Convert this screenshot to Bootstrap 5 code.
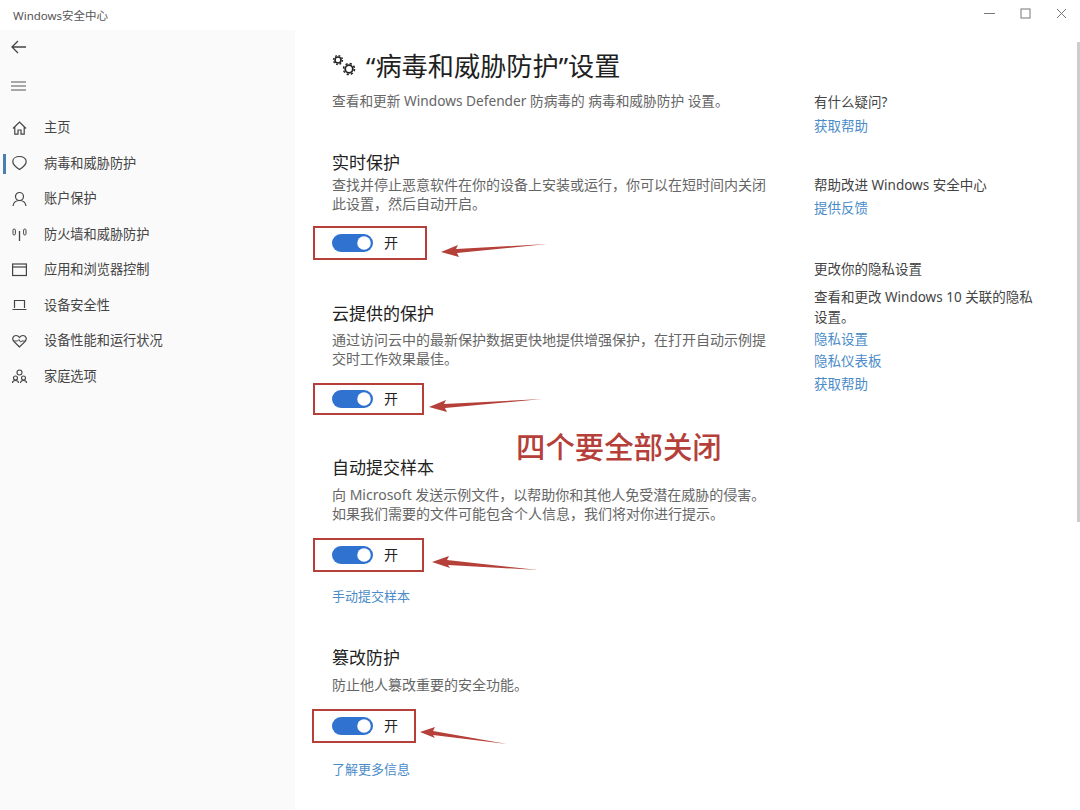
<!DOCTYPE html>
<html lang="zh-CN">
<head>
    <meta charset="UTF-8">
    <meta name="viewport" content="width=device-width, initial-scale=1">
    <title>Windows安全中心</title>
    <link href="https://cdn.jsdelivr.net/npm/bootstrap@5.3.0/dist/css/bootstrap.min.css" rel="stylesheet">
    <style>
        html, body { height: 100%; }
        body { font-family: "Noto Sans", "Noto Sans CJK SC", sans-serif; font-size: 14px; color: #333; background: #fff; overflow: hidden; }
        .app-shell { width: 1080px; height: 810px; position: relative; }
        .title-bar { height: 30px; }
        .app-name { font-size: 11.5px; color: #555; padding-left: 13px; padding-top: 8px; line-height: 16px; }
        .win-btns { gap: 25px; padding-right: 13px; padding-top: 7px; }
        .body-row { height: 780px; }
        .side-panel { width: 295px; background: #fafafa; }
        .side-top { height: 80px; padding-left: 11px; padding-top: 10px; }
        .side-top svg { display: block; }
        .side-top .menu-lines { margin-top: 27px; }
        .side-item { height: 35.5px; padding-left: 12px; gap: 17px; color: #444; font-size: 13.2px; line-height: 1; position: relative; }
        .side-item svg { flex: none; width: 15px; height: 16px; }
        .side-item.is-on::before { content: ""; position: absolute; left: 3px; top: 8px; width: 3px; height: 20px; background: #4a7fb0; }
        .center-col { width: 519px; padding-left: 37px; padding-top: 18px; }
        .page-title { font-size: 26.2px; line-height: 36px; color: #1f1f1f; margin: 0; font-weight: 400; }
        .page-title svg { margin-right: 9px; }
        .page-sub { margin-top: 7px; line-height: 20px; color: #666; font-size: 13.7px; }
        .block-head { font-size: 17px; line-height: 24px; color: #222; font-weight: 400; margin: 0; }
        .block-text { margin-top: 5px; line-height: 19px; font-size: 14px; color: #666; }
        .block-text.is-tight { margin-top: 0; }
        .toggle-row { position: relative; height: 34px; margin-top: 13px; }
        .toggle-box { display: inline-flex; align-items: center; height: 100%; margin-left: -19px; padding-left: 17px; border: 2px solid #b5403a; }
        .toggle-box .form-check { margin: 0; min-height: 0; padding-left: 0; display: flex; }
        .toggle-box .form-check-input { width: 41px; height: 18px; margin: 0; background-color: #2f72cf; border: 0; float: none; }
        .toggle-label { margin-left: 11px; color: #222; font-size: 14px; line-height: 1; }
        .red-arrow { position: absolute; overflow: visible; }
        .blue-link { color: #4b8cc8; text-decoration: none; line-height: 20px; font-size: 13.5px; display: block; }
        .center-col .blue-link { font-size: 13px; }
        .right-col { padding-top: 62px; }
        .right-col p { margin: 0; line-height: 20px; color: #444; font-size: 13.5px; }
        .overlay-note { position: absolute; left: 516px; top: 427px; font-size: 29.4px; line-height: 40px; color: #b5403a; font-weight: 500; }
        .scroll-thumb { position: absolute; right: 0; top: 42px; width: 3px; height: 480px; background: #cdcdcd; }
    </style>
</head>
<body>
<div class="app-shell">

    <div class="title-bar d-flex justify-content-between">
        <div class="app-name">Windows安全中心</div>
        <div class="win-btns d-flex">
            <svg width="11" height="14" viewBox="0 0 11 14"><path d="M0 6.500h11" stroke="#777" stroke-width="1"/></svg>
            <svg width="11" height="14" viewBox="0 0 11 14"><rect x="1" y="2" width="9" height="9" fill="none" stroke="#777"/></svg>
            <svg width="11" height="14" viewBox="0 0 11 14"><path d="M1 2l9 9M10 2l-9 9" stroke="#777" fill="none"/></svg>
        </div>
    </div>

    <div class="body-row d-flex">
        <nav class="side-panel flex-shrink-0">
            <div class="side-top">
                <svg width="16" height="14" viewBox="0 0 16 14"><path d="M15 7H1.500M7 1L1 7l6 6" fill="none" stroke="#444" stroke-width="1.300"/></svg>
                <svg class="menu-lines" width="15" height="10" viewBox="0 0 15 10"><path d="M0 1h15M0 5h15M0 9h15" stroke="#555" stroke-width="1.200"/></svg>
            </div>
            <div class="side-item d-flex align-items-center">
                <svg viewBox="0 0 15 16"><path d="M1 8.500L7.500 2l6.500 6.500M2.800 7v7.200H6V10h3v4.200h3.200V7" fill="none" stroke="#444" stroke-width="1.200"/></svg>主页
            </div>
            <div class="side-item is-on d-flex align-items-center">
                <svg viewBox="0 0 15 16"><path d="M7.500 14.500C3.500 12 .8 9 .8 6.500.8 3.500 3.800 1.500 7.500 1.500s6.700 2 6.700 5c0 2.500-2.700 5.500-6.700 8z" fill="none" stroke="#444" stroke-width="1.200"/></svg>病毒和威胁防护
            </div>
            <div class="side-item d-flex align-items-center">
                <svg viewBox="0 0 15 16"><circle cx="7.500" cy="5.500" r="4" fill="none" stroke="#444" stroke-width="1.200"/><path d="M1 15c.5-3.500 3-5.500 6.500-5.500S13.500 11.500 14 15" fill="none" stroke="#444" stroke-width="1.200"/></svg>账户保护
            </div>
            <div class="side-item d-flex align-items-center">
                <svg viewBox="0 0 15 16"><path d="M7.500 5v10" stroke="#444" stroke-width="1.300"/><rect x="1" y="3" width="2.400" height="6" rx="1.200" fill="none" stroke="#444"/><rect x="11.600" y="3" width="2.400" height="6" rx="1.200" fill="none" stroke="#444"/></svg>防火墙和威胁防护
            </div>
            <div class="side-item d-flex align-items-center">
                <svg viewBox="0 0 15 16"><rect x=".6" y="2" width="13.800" height="11.500" fill="none" stroke="#444" stroke-width="1.200"/><path d="M.6 5h13.800" stroke="#444" stroke-width="1.200"/></svg>应用和浏览器控制
            </div>
            <div class="side-item d-flex align-items-center">
                <svg viewBox="0 0 15 16"><path d="M2.500 11V3.500h10V11M.5 12.500h14" fill="none" stroke="#444" stroke-width="1.200"/></svg>设备安全性
            </div>
            <div class="side-item d-flex align-items-center">
                <svg viewBox="0 0 15 16"><path d="M7.500 14L1.800 8.300C-.5 5.500 1.500 2.500 4 2.500c1.500 0 2.700.8 3.500 2 .8-1.200 2-2 3.500-2 2.500 0 4.500 3 2.200 5.800z" fill="none" stroke="#444" stroke-width="1.200"/><path d="M2 8h3.500l1.500-1.500L8.500 9l1.500-1h3" fill="none" stroke="#444"/></svg>设备性能和运行状况
            </div>
            <div class="side-item d-flex align-items-center">
                <svg viewBox="0 0 15 16"><circle cx="7.500" cy="4.500" r="2.500" fill="none" stroke="#444" stroke-width="1.100"/><circle cx="3.500" cy="10" r="2" fill="none" stroke="#444" stroke-width="1.100"/><circle cx="11.500" cy="10" r="2" fill="none" stroke="#444" stroke-width="1.100"/><path d="M.5 15c0-1.500 1.200-2.500 3-2.500s3 1 3 2.500M8.500 15c0-1.500 1.200-2.500 3-2.500s3 1 3 2.500" fill="none" stroke="#444" stroke-width="1.100"/></svg>家庭选项
            </div>
        </nav>

        <main class="center-col flex-shrink-0">
            <h1 class="page-title d-flex align-items-center">
                <svg width="25" height="24" viewBox="0 0 25 24"><circle cx="6" cy="6" r="3" fill="none" stroke="#222" stroke-width="1.600"/><circle cx="6" cy="6" r="4.500" fill="none" stroke="#222" stroke-width="1.300" stroke-dasharray="1.800 1.730"/><circle cx="17" cy="15" r="3.800" fill="none" stroke="#222" stroke-width="1.800"/><circle cx="17" cy="15" r="5.500" fill="none" stroke="#222" stroke-width="1.500" stroke-dasharray="2.200 2.120"/></svg>“病毒和威胁防护”设置
            </h1>
            <div class="page-sub">查看和更新 Windows Defender 防病毒的 病毒和威胁防护 设置。</div>

            <section style="margin-top:40px">
                <h2 class="block-head">实时保护</h2>
                <div class="block-text is-tight">查找并停止恶意软件在你的设备上安装或运行，你可以在短时间内关闭<br>此设置，然后自动开启。</div>
                <div class="toggle-row">
                    <div class="toggle-box" style="width:114px">
                        <div class="form-check form-switch"><input class="form-check-input" type="checkbox" role="switch" checked></div>
                        <span class="toggle-label">开</span>
                    </div>
                    <svg class="red-arrow" style="left:109px;top:17px" width="107" height="12" viewBox="0 0 107 12"><polygon points="0,9 17,2 15,6 106,1 16,10 18,14" fill="#b5403a"/></svg>
                </div>
            </section>

            <section style="margin-top:42px">
                <h2 class="block-head">云提供的保护</h2>
                <div class="block-text" style="margin-top:4px">通过访问云中的最新保护数据更快地提供增强保护，在打开自动示例提<br>交时工作效果最佳。</div>
                <div class="toggle-row" style="height:32px;margin-top:15px">
                    <div class="toggle-box" style="width:111px">
                        <div class="form-check form-switch"><input class="form-check-input" type="checkbox" role="switch" checked></div>
                        <span class="toggle-label">开</span>
                    </div>
                    <svg class="red-arrow" style="left:97px;top:15px" width="114" height="12" viewBox="0 0 114 12"><polygon points="0,9 17,2 15,6 113,1 16,10 18,14" fill="#b5403a"/></svg>
                </div>
            </section>

            <section style="margin-top:41px">
                <h2 class="block-head">自动提交样本</h2>
                <div class="block-text">向 Microsoft 发送示例文件，以帮助你和其他人免受潜在威胁的侵害。<br>如果我们需要的文件可能包含个人信息，我们将对你进行提示。</div>
                <div class="toggle-row" style="margin-top:15px">
                    <div class="toggle-box" style="width:111px">
                        <div class="form-check form-switch"><input class="form-check-input" type="checkbox" role="switch" checked></div>
                        <span class="toggle-label">开</span>
                    </div>
                    <svg class="red-arrow" style="left:100px;top:18px" width="107" height="15" viewBox="0 0 107 15"><polygon points="0,6 17,0 15,4 106,14 16,9 18,12" fill="#b5403a"/></svg>
                </div>
                <a class="blue-link" style="margin-top:14px" href="#">手动提交样本</a>
            </section>

            <section style="margin-top:40px">
                <h2 class="block-head">篡改防护</h2>
                <div class="block-text">防止他人篡改重要的安全功能。</div>
                <div class="toggle-row" style="margin-top:15px">
                    <div class="toggle-box" style="width:104px;margin-left:-20px;padding-left:18px">
                        <div class="form-check form-switch"><input class="form-check-input" type="checkbox" role="switch" checked></div>
                        <span class="toggle-label">开</span>
                    </div>
                    <svg class="red-arrow" style="left:88px;top:18px" width="88" height="18" viewBox="0 0 88 18"><polygon points="0,5 15,0 13,4 87,17 13,8 15,11" fill="#b5403a"/></svg>
                </div>
                <a class="blue-link" style="margin-top:16px" href="#">了解更多信息</a>
            </section>
        </main>

        <aside class="right-col flex-grow-1">
            <p>有什么疑问?</p>
            <a class="blue-link" style="margin-top:4px" href="#">获取帮助</a>
            <p style="margin-top:39px">帮助改进 Windows 安全中心</p>
            <a class="blue-link" style="margin-top:3px" href="#">提供反馈</a>
            <p style="margin-top:41px">更改你的隐私设置</p>
            <p style="margin-top:8px">查看和更改 Windows 10 关联的隐私<br>设置。</p>
            <a class="blue-link" style="margin-top:2px" href="#">隐私设置</a>
            <a class="blue-link" style="margin-top:2px" href="#">隐私仪表板</a>
            <a class="blue-link" style="margin-top:3px" href="#">获取帮助</a>
        </aside>
    </div>

    <div class="overlay-note">四个要全部关闭</div>
    <div class="scroll-thumb"></div>
</div>
<script src="https://cdn.jsdelivr.net/npm/bootstrap@5.3.0/dist/js/bootstrap.bundle.min.js"></script>
</body>
</html>
